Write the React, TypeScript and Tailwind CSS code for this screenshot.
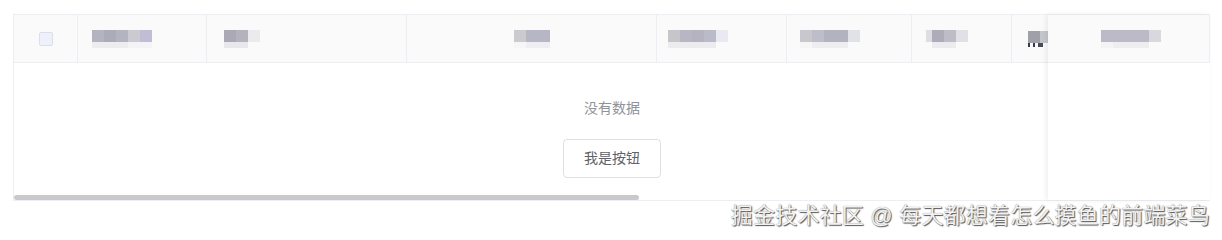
import React from 'react';

type Block = [number, string];

// blurred header labels, drawn as 12px mosaic blocks
const heads: { top: Block[]; bottom: Block[] }[] = [
  {
    top: [[12, '#b4b3c0'], [12, '#acabb9'], [12, '#b4b3c0'], [12, '#cacad0'], [12, '#bfbed6']],
    bottom: [[36, '#ededf0'], [24, '#f4f4f6']],
  },
  {
    top: [[12, '#aaa9b5'], [12, '#b4b3bd'], [12, '#ebebee']],
    bottom: [[24, '#e8e8ec']],
  },
  {
    top: [[12, '#cacacf'], [24, '#b7b6c4']],
    bottom: [[12, '#f6f6f7'], [24, '#efeff3']],
  },
  {
    top: [[12, '#c5c5ca'], [12, '#b7b6c3'], [12, '#b4b3bf'], [12, '#bbbac8'], [12, '#e9e9f2']],
    bottom: [[48, '#ececef']],
  },
  {
    top: [[12, '#c7c7cc'], [12, '#bebdca'], [24, '#b3b2bf'], [12, '#e1e1e8']],
    bottom: [[12, '#f6f6f7'], [36, '#eeeef1']],
  },
  {
    top: [[6, '#dddde2'], [12, '#adacb8'], [12, '#bdbcc7'], [12, '#e0e0e6']],
    bottom: [[6, '#fafafa'], [24, '#ececef']],
  },
];

function Mosaic({ top, bottom }: { top: Block[]; bottom: Block[] }) {
  return (
    <div className="flex flex-col">
      <div className="flex h-[12px]">
        {top.map(([w, c], i) => (
          <span key={i} className="h-full" style={{ width: w, background: c }} />
        ))}
      </div>
      <div className="flex h-[6px]">
        {bottom.map(([w, c], i) => (
          <span key={i} className="h-full" style={{ width: w, background: c }} />
        ))}
      </div>
    </div>
  );
}

export default function App() {
  return (
    <div className="min-h-[240px] bg-white pt-[14px] pl-[13px] font-['Liberation_Sans','Noto_Sans_CJK_SC',sans-serif]">
      {/* Table */}
      <div className="relative w-[1197px] border-l border-t border-b border-[#ebeef5] bg-white">
        {/* Header */}
        <div className="flex h-[48px] border-b border-[#ebeef5] bg-[#fafafa]">
          <div className="flex w-[64px] items-center justify-center border-r border-[#ebeef5]">
            <span className="ml-[1px] h-[14px] w-[14px] rounded-[2px] border border-[#dcdfe6] bg-[#eef1fb]" />
          </div>
          <div className="flex w-[129px] items-center border-r border-[#ebeef5] pl-[14px]">
            <Mosaic {...heads[0]} />
          </div>
          <div className="flex w-[200px] items-center border-r border-[#ebeef5] pl-[17px]">
            <Mosaic {...heads[1]} />
          </div>
          <div className="flex w-[250px] items-center justify-center border-r border-[#ebeef5]">
            <Mosaic {...heads[2]} />
          </div>
          <div className="flex w-[130px] items-center border-r border-[#ebeef5] pl-[11px]">
            <Mosaic {...heads[3]} />
          </div>
          <div className="flex w-[125px] items-center border-r border-[#ebeef5] pl-[13px]">
            <Mosaic {...heads[4]} />
          </div>
          <div className="flex w-[100px] items-center border-r border-[#ebeef5] pl-[14px]">
            <Mosaic {...heads[5]} />
          </div>
          <div className="flex flex-1 items-center pl-[16px]">
            <div className="flex flex-col">
              <div className="flex h-[12px]">
                <span className="w-[12px] bg-[#a0a0a8]" />
                <span className="w-[12px] bg-[#c5c5cc]" />
              </div>
              <div className="flex h-[4px] gap-[3px]">
                <span className="w-[2px] bg-[#3a3a48]" />
                <span className="w-[2px] bg-[#3a3a48]" />
                <span className="w-[5px] bg-[#4a4a5a]" />
              </div>
            </div>
          </div>
        </div>

        {/* Body */}
        <div className="flex h-[137px] flex-col">
          <div className="flex flex-1 flex-col items-center pt-[35px]">
            <div className="text-[14px] leading-[20px] text-[#909399]">没有数据</div>
            <button className="mt-[21px] h-[39px] w-[98px] rounded-[4px] border border-[#dcdfe6] bg-white text-[14px] text-[#606266]">
              我是按钮
            </button>
          </div>
          <div className="h-[5px] w-[625px] rounded-full bg-[#c9c9cd]" />
        </div>

        {/* Fixed right column */}
        <div className="absolute top-0 right-0 bottom-0 w-[162px] bg-white shadow-[-2px_0_5px_rgba(0,0,0,0.07)]">
          <div className="flex h-[48px] items-center justify-center border-r border-b border-[#ebeef5] bg-[#fafafa] pl-[4px]">
            <Mosaic
              top={[[48, '#bbbac6'], [12, '#d8d8de']]}
              bottom={[[12, '#f4f4f6'], [36, '#eeeef1']]}
            />
          </div>
        </div>
      </div>

      {/* Watermark */}
      <div className="flex w-[1197px] justify-end">
        <span className="mt-[2px] text-[22px] leading-[26px] tracking-[0.2px] text-[#f2f2f2] [text-shadow:1px_1px_1px_#555,0_0_1px_#777]">
          掘金技术社区 @ 每天都想着怎么摸鱼的前端菜鸟
        </span>
      </div>
    </div>
  );
}
